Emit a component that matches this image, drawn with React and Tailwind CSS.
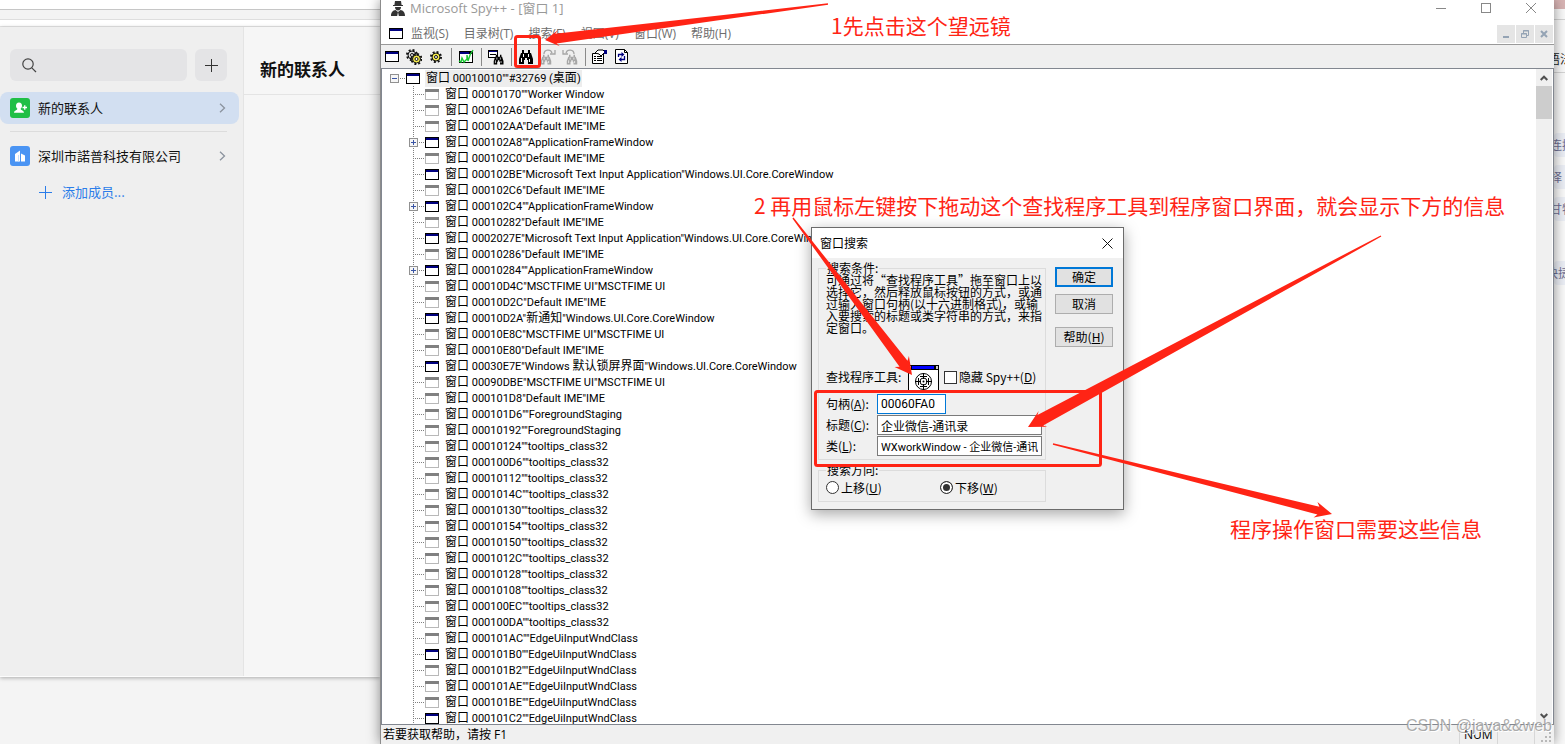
import React from "react";

const UI = "font-['Open_Sans','Noto_Sans_CJK_SC',sans-serif]";
const CJK = "font-['Noto_Sans_CJK_SC',sans-serif]";
const SANS = "font-['Roboto','Noto_Sans_CJK_SC',sans-serif]";

const IME = '"Default IME"IME';
const MSCTF = '"MSCTFIME UI"MSCTFIME UI';
const FRAME = '""ApplicationFrameWindow';
const TEXTIN = '"Microsoft Text Input Application"Windows.UI.Core.CoreWindow';
const TIP = '""tooltips_class32';
const EDGE = '""EdgeUiInputWndClass';
const STAGING = '""ForegroundStaging';

const nodes = [
  ["00010170", '""Worker Window', false, false],
  ["000102A6", IME, false, false],
  ["000102AA", IME, false, false],
  ["000102A8", FRAME, true, true],
  ["000102C0", IME, false, false],
  ["000102BE", TEXTIN, true, false],
  ["000102C6", IME, false, false],
  ["000102C4", FRAME, true, true],
  ["00010282", IME, false, false],
  ["0002027E", TEXTIN, true, false],
  ["00010286", IME, false, false],
  ["00010284", FRAME, true, true],
  ["00010D4C", MSCTF, false, false],
  ["00010D2C", IME, false, false],
  ["00010D2A", '"新通知"Windows.UI.Core.CoreWindow', true, false],
  ["00010E8C", MSCTF, false, false],
  ["00010E80", IME, false, false],
  ["00030E7E", '"Windows 默认锁屏界面"Windows.UI.Core.CoreWindow', true, false],
  ["00090DBE", MSCTF, false, false],
  ["000101D8", IME, false, false],
  ["000101D6", STAGING, false, false],
  ["00010192", STAGING, false, false],
  ["00010124", TIP, false, false],
  ["000100D6", TIP, false, false],
  ["00010112", TIP, false, false],
  ["0001014C", TIP, false, false],
  ["00010130", TIP, false, false],
  ["00010154", TIP, false, false],
  ["00010150", TIP, false, false],
  ["0001012C", TIP, false, false],
  ["00010128", TIP, false, false],
  ["00010108", TIP, false, false],
  ["000100EC", TIP, false, false],
  ["000100DA", TIP, false, false],
  ["000101AC", EDGE, false, false],
  ["000101B0", EDGE, true, false],
  ["000101B2", EDGE, false, false],
  ["000101AE", EDGE, false, false],
  ["000101BE", EDGE, false, false],
  ["000101C2", EDGE, true, false],
];

function WindowIcon({ active = true }) {
  return (
    <svg width="14" height="11" viewBox="0 0 14 11" className="shrink-0" shapeRendering="crispEdges">
      <rect width="14" height="11" fill={active ? "#000" : "#b8b8b8"} />
      <rect x="1" y="3" width="12" height="7" fill="#fff" />
      <rect x={active ? 1 : 0} y={active ? 1 : 0} width={active ? 12 : 14} height={active ? 2 : 3} fill={active ? "#000080" : "#808080"} />
    </svg>
  );
}

function Connector({ expandable }) {
  return (
    <svg width="16" height="16" viewBox="0 0 16 16" className="shrink-0" shapeRendering="crispEdges">
      <path d="M4.500 0V16M4 8.500H16" stroke="#808080" strokeDasharray="1 1" />
      {expandable && (
        <>
          <rect x="0.500" y="4.500" width="8" height="8" fill="#f6f6f6" stroke="#919191" />
          <path d="M2 8.500H7M4.500 6V11" stroke="#3a55a5" />
        </>
      )}
    </svg>
  );
}

function Binoculars({ color = "#000" }) {
  return (
    <g fill={color}>
      <path d="M4 1h2v3h4V1h2v3h1l1 3 1 3v5h-5v-4H9V9H7v2H6v4H1v-5l1-3 1-3h1z" />
      <path d="M3.500 9v4M5.500 5v3M10.500 5v3M11.500 10v3" stroke="#fff" fill="none" />
    </g>
  );
}

function Gear({ x, y, fill = "#f4ea4c" }) {
  return (
    <g transform={`translate(${x} ${y})`}>
      <circle r="5" fill="none" stroke="#111" strokeWidth="2" strokeDasharray="1.960 1.960" />
      <circle r="4" fill={fill} stroke="#111" strokeWidth="1" />
      <circle r="1.500" fill="#fff" stroke="#111" />
    </g>
  );
}

const tools = [
  ["窗口", <g key="a"><rect x="1" y="2" width="14" height="11" /><rect x="2" y="5" width="12" height="7" fill="#fff" /><rect x="2" y="3" width="12" height="2" fill="#000080" /></g>],
  ["进程", <g key="b"><Gear x={6} y={6} fill="#ddd" /><Gear x={10.5} y={10} /></g>],
  ["线程", <Gear key="c" x={8} y={8} />],
  null,
  ["记录消息", <g key="d"><rect x="1" y="2" width="14" height="12" /><rect x="2" y="5" width="12" height="8" fill="#fff" /><rect x="2" y="3" width="9" height="2" fill="#000080" /><path d="M1 12l2 1 1-4 2 4 3-3V6l1 6 2-6 3-5" fill="none" stroke="#18c832" strokeWidth="1.4" /></g>],
  null,
  ["查找窗口", <g key="e"><rect x="0" y="1" width="10" height="8" /><rect x="1" y="3" width="8" height="5" fill="#fff" /><path d="M2 5.500h6" stroke="#000" /><rect x="1" y="2" width="8" height="1" fill="#000080" /><g transform="translate(5 5) scale(.7 .7)"><Binoculars /></g></g>],
  null,
  ["查找", <Binoculars key="f" />],
  ["查找下一个", <g key="g"><g transform="translate(0 5) scale(.75 .7)"><Binoculars color="#a6a6a6" /></g><path d="M4 5c0-5 7-5 8-1M15 1v4h-5" fill="none" stroke="#a6a6a6" strokeWidth="1.3" /></g>],
  ["查找上一个", <g key="h"><g transform="translate(4 5) scale(.75 .7)"><Binoculars color="#a6a6a6" /></g><path d="M12 5c0-5-7-5-8-1M1 1v4h5" fill="none" stroke="#a6a6a6" strokeWidth="1.3" /></g>],
  null,
  ["属性", <g key="i"><path d="M.5 4.500h11v10h-11z" fill="#fff" stroke="#000" /><path d="M2 7.500h2M5 7.500h5M2 9.500h2M5 9.500h5M2 11.500h2M5 11.500h5" stroke="#000" /><path d="M3 4l3-3h5l2 2-4 4-2-2z" fill="#fff" stroke="#000" /><path d="M12 1h3v4h-3z" fill="#000080" /></g>],
  ["刷新", <g key="j"><path d="M1.500 .5h9l3 3v11h-12z" fill="#fff" stroke="#000" /><path d="M10.500 .5v3h3" fill="none" stroke="#000" /><path d="M4.500 8V5.500H8M10.500 7v3.500H7" fill="none" stroke="#000080" strokeWidth="1.300" /><path d="M7.500 3l3 2.500-3 2.500zM7.500 8v5l-3-2.500z" fill="#000080" /></g>],
];

function Chevron() {
  return (
    <svg width="7" height="10" viewBox="0 0 7 10" fill="none" stroke="#8b939e" strokeWidth="1.300">
      <path d="M1 .8L5.500 5 1 9.200" />
    </svg>
  );
}

function Contacts() {
  return (
    <div className="relative flex w-[380px] shrink-0 flex-col bg-[#f4f4f4]">
      <div className="h-[10px] border-b border-[#c6c6c6] bg-white" />
      <div className="h-[10px] border-b border-[#dedede] bg-[#f3f3f3]" />
      <div className="h-[7px] border-b border-[#e6e6e6] bg-white" />
      <main className="flex h-[650px] border-b border-[#fcfcfc] shadow-[0_1px_4px_rgba(0,0,0,0.3)]">
        <aside className="w-[244px] shrink-0 border-r border-[#e4e4e4] bg-[#efefef] pt-[22px]">
          <div className="flex gap-2 pl-[10px]">
            <label className="flex h-8 w-[177px] items-center rounded-md bg-[#e4e4e6] pl-3">
              <svg width="15" height="15" viewBox="0 0 15 15" fill="none" stroke="#444" strokeWidth="1.200">
                <circle cx="6" cy="6" r="5.200" />
                <path d="M9.800 9.800l4.200 4.200" />
              </svg>
              <input aria-label="搜索" className="w-32 bg-transparent outline-none" />
            </label>
            <button aria-label="添加" className="flex size-8 items-center justify-center rounded-md bg-[#e4e4e6]">
              <svg width="13" height="13" viewBox="0 0 13 13" stroke="#333" shapeRendering="crispEdges">
                <path d="M0 6.500h13M6.500 0v13" />
              </svg>
            </button>
          </div>
          <nav className={`mt-[11px] flex flex-col text-[13px] text-[#111] ${CJK}`}>
            <a href="#contacts" className="mr-1 flex h-8 items-center rounded-lg bg-[#d2dff1] pr-[13px] pl-[10px]">
              <svg width="20" height="20" viewBox="0 0 20 20">
                <rect width="20" height="20" rx="3" fill="#20bf46" />
                <path d="M9 4.500c2 0 3 1.400 3 3.200 0 1.300-.6 2.200-1.400 3 0 1.500 3.400 1.600 3.400 4H4c0-2.400 3.400-2.500 3.400-4C6.600 9.900 6 9 6 7.700c0-1.800 1-3.200 3-3.200z" fill="#fff" />
                <path d="M12.500 9.500h4.500M14.750 7.200v4.600" stroke="#fff" strokeWidth="1.300" />
              </svg>
              <span className="ml-2 flex-1">新的联系人</span>
              <Chevron />
            </a>
            <hr className="mt-[7px] mr-4 ml-[10px] border-[#dcdcdc]" />
            <a href="#company" className="mt-2 mr-1 flex h-8 items-center pr-[13px] pl-[10px]">
              <svg width="20" height="20" viewBox="0 0 20 20">
                <rect width="20" height="20" rx="3" fill="#4a94f3" />
                <path d="M5 15.500V8l5-3.500v11zM11 7.500l4 2v6h-4z" fill="#fff" />
                <path d="M8.500 9v6.500" stroke="#c9dffb" />
              </svg>
              <span className="ml-2 flex-1">深圳市諾普科技有限公司</span>
              <Chevron />
            </a>
            <a href="#add" className="mt-1 flex h-8 items-center gap-[10px] pl-[39px] text-[#2b7de9]">
              <svg width="13" height="13" viewBox="0 0 13 13" stroke="#2b7de9" shapeRendering="crispEdges">
                <path d="M0 6.500h13M6.500 0v13" />
              </svg>
              <span>添加成员...</span>
            </a>
          </nav>
        </aside>
        <section className="min-w-0 flex-1 bg-[#f6f6f6]">
          <header className="flex h-[68px] items-center border-b border-[#e4e4e4] pt-4 pl-4">
            <h1 className={`text-[17px] font-bold text-[#111] ${CJK}`}>新的联系人</h1>
          </header>
        </section>
      </main>
    </div>
  );
}

function TitleBar() {
  return (
    <header className="flex h-4 items-center bg-white pl-[10px]">
      <svg width="14" height="15" viewBox="0 0 14 15" fill="#333">
        <path d="M4 0h6l.6 4H12v1H2V4h1.400zM4 6h6c0 2-1.200 3.500-3 3.500S4 8 4 6zM0 15c0-4 2-5.500 4.500-6L7 11l2.500-2c2.500.5 4.500 2 4.500 6z" />
        <path d="M7 11l-1 4h2z" fill="#ddd" />
      </svg>
      <span className={`ml-[5px] flex-1 text-[13px] leading-4 whitespace-nowrap text-[#999] ${UI}`}>Microsoft Spy++ - [窗口 1]</span>
      <div className="flex h-4 items-center gap-[35px] pr-[18px]">
        <button aria-label="最小化"><svg width="10" height="10" viewBox="0 0 10 10" stroke="#888" shapeRendering="crispEdges"><path d="M0 5.500h10" /></svg></button>
        <button aria-label="最大化"><svg width="10" height="10" viewBox="0 0 10 10" fill="none" stroke="#888" shapeRendering="crispEdges"><path d="M.5.5h9v9h-9z" /></svg></button>
        <button aria-label="关闭"><svg width="10" height="10" viewBox="0 0 10 10" stroke="#888"><path d="M0 0l10 10M10 0L0 10" /></svg></button>
      </div>
    </header>
  );
}

function MenuBar() {
  const child = "flex size-[18px] items-center justify-center bg-[#e5e5e5]";
  return (
    <nav className="flex h-[29px] items-center border-b border-[#999] bg-white pt-[7px] pl-2">
      <WindowIcon />
      <div className={`ml-2 flex flex-1 gap-[15px] text-[12px] whitespace-nowrap text-[#6d6d6d] ${UI}`}>
        {["监视(S)", "目录树(T)", "搜索(F)", "视图(V)", "窗口(W)", "帮助(H)"].map((m) => (
          <button key={m}>{m}</button>
        ))}
      </div>
      <div className="flex gap-px pr-px">
        <button aria-label="最小化子窗口" className={child}>
          <svg width="10" height="10" viewBox="0 0 10 10" stroke="#94a3b4" strokeWidth="2"><path d="M2 8h6" /></svg>
        </button>
        <button aria-label="还原子窗口" className={child}>
          <svg width="10" height="10" viewBox="0 0 10 10" fill="none" stroke="#94a3b4"><path d="M1.500 4.500h5v4h-5zM1 5h6M3.500 4V1.500h5v5H7M3 2h6" /></svg>
        </button>
        <button aria-label="关闭子窗口" className={child}>
          <svg width="10" height="10" viewBox="0 0 10 10" stroke="#94a3b4" strokeWidth="2"><path d="M2 2l6 6M8 2L2 8" /></svg>
        </button>
      </div>
    </nav>
  );
}

function ToolBar() {
  return (
    <div className="flex h-[23px] shrink-0 items-center bg-[#efefef]">
      {tools.map((t, i) =>
        t ? (
          <button key={t[0]} aria-label={t[0]} className="flex w-[22px] justify-center">
            <svg width="16" height="16" viewBox="0 0 16 16">{t[1]}</svg>
          </button>
        ) : (
          <span key={i} className="flex w-2 justify-center"><i className="h-[18px] w-px bg-[#8a8a8a]" /></span>
        )
      )}
    </div>
  );
}

function NodeLabel({ code, text }) {
  const parts = `窗口 ${code}${text}`.split(/([\u4e00-\u9fff]+)/);
  return (
    <span className="whitespace-pre text-black">
      {parts.map((p, i) => (i % 2 ? <span key={i} className="text-[12px]">{p}</span> : p))}
    </span>
  );
}

function Tree() {
  return (
    <div className="flex min-h-0 flex-1 border border-[#828790] bg-white">
      <ul className={`min-w-0 flex-1 overflow-hidden pt-px text-[11px] leading-4 ${SANS}`}>
        <li className="flex h-4 items-center pl-2">
          <svg width="16" height="16" viewBox="0 0 16 16" shapeRendering="crispEdges">
            <rect x=".5" y="4.500" width="8" height="8" fill="#f6f6f6" stroke="#919191" />
            <path d="M2 8.500H7" stroke="#3a55a5" />
            <path d="M10 8.500H16" stroke="#808080" strokeDasharray="1 1" />
          </svg>
          <WindowIcon />
          <span className="ml-[5px] bg-[#ededed] px-px">
            <NodeLabel code="00010010" text={'""#32769 (桌面)'} />
          </span>
        </li>
        {nodes.map(([code, text, active, plus]) => (
          <li key={code} className="flex h-4 items-center pl-[27px]">
            <Connector expandable={plus} />
            <span className="mr-[6px]"><WindowIcon active={active} /></span>
            <NodeLabel code={code} text={text} />
          </li>
        ))}
      </ul>
      <div className="mr-px flex w-4 flex-col items-center bg-[#f0f0f0]">
        <button aria-label="向上滚动" className="flex h-[17px] items-center">
          <svg width="8" height="6" viewBox="0 0 8 6" fill="none" stroke="#505050" strokeWidth="2"><path d="M.7 5L4 1.700 7.300 5" /></svg>
        </button>
        <div className="h-[33px] w-full bg-[#cdcdcd]" />
        <button aria-label="向下滚动" className="mt-auto flex h-[17px] items-center">
          <svg width="8" height="6" viewBox="0 0 8 6" fill="none" stroke="#505050" strokeWidth="2"><path d="M.7 1L4 4.300 7.300 1" /></svg>
        </button>
      </div>
    </div>
  );
}

function StatusBar() {
  return (
    <footer className={`flex h-[19px] shrink-0 items-center bg-[#f0f0f0] pl-[2px] text-[12px] leading-4 text-black ${UI}`}>
      <span className="flex-1">若要获取帮助，请按 F1</span>
      <span className="flex h-full w-[39px] items-center border-x border-[#d7d7d7] pl-1">NUM</span>
      <span className="h-full w-[37px] border-r border-[#d7d7d7]" />
      <svg width="19" height="19" viewBox="0 0 19 19" fill="#b8b8b8">
        <path d="M14 7h2v2h-2zM10 11h2v2h-2zM14 11h2v2h-2zM6 15h2v2H6zM10 15h2v2h-2zM14 15h2v2h-2z" />
      </svg>
    </footer>
  );
}

function Key({ children, tail = "" }) {
  return <>(<u>{children}</u>){tail}</>;
}

function SearchDialog() {
  const field = `h-5 border bg-white px-[3px] text-black outline-none ${SANS}`;
  const button = "flex h-5 w-[58px] items-center justify-center border bg-[#e1e1e1]";
  return (
    <div role="dialog" aria-label="窗口搜索" className="absolute top-[227px] left-[811px] w-[313px] border border-[#6b6b6b] bg-[#f0f0f0] shadow-[0_4px_14px_rgba(0,0,0,0.35)]">
      <header className={`flex h-[30px] items-center bg-white pr-[10px] pl-2 text-[12px] ${CJK}`}>
        <span className="flex-1">窗口搜索</span>
        <button aria-label="关闭对话框">
          <svg width="11" height="11" viewBox="0 0 11 11" stroke="#111"><path d="M.5.5l10 10M10.500.5l-10 10" /></svg>
        </button>
      </header>
      <form className={`flex justify-between pr-[10px] pb-[7px] pl-[6px] text-[12px] leading-3 text-black ${CJK}`}>
        <div className="w-[228px]">
          <fieldset className="mt-1 h-[198px] border border-[#dcdcdc] pl-[7px]">
            <legend className="px-px">搜索条件:</legend>
            <p className="h-[90px] whitespace-nowrap">
              可通过将“查找程序工具”拖至窗口上以<br />
              选择它，然后释放鼠标按钮的方式，或通<br />
              过输入窗口句柄(以十六进制格式)，或输<br />
              入要搜索的标题或类字符串的方式，来指<br />
              定窗口。
            </p>
            <div className="flex h-[26px] items-end whitespace-nowrap">
              <span className="w-[82px] self-center">查找程序工具:</span>
              <svg width="31" height="25" viewBox="0 0 31 25" className="shrink-0">
                <path d="M.5 26V.5h30V26" fill="#fff" stroke="#000" />
                <rect width="31" height="5" />
                <rect x="4" y="1" width="22" height="3" fill="#00f" />
                <path d="M1 1h2v3H1zM28 1h2v3h-2z" fill="#ccc" />
                <g fill="none" stroke="#000">
                  <circle cx="15.500" cy="16.500" r="8" />
                  <circle cx="15.500" cy="16.500" r="3.500" />
                  <path d="M15.500 8v6M15.500 19v6M7 16.500h6M18 16.500h6M12 11.500h7M12 21.500h7M10.500 13v7M20.500 13v7" />
                </g>
                <circle cx="15.500" cy="16.500" r="1" />
              </svg>
              <label className="ml-[5px] flex items-center gap-[2px] self-center">
                <input type="checkbox" className="size-[13px] appearance-none border border-[#333] bg-white" />
                <span>隐藏 Spy++(<u>D</u>)</span>
              </label>
            </div>
            <div className="mt-1 grid grid-cols-[51px_165px] items-center gap-y-px">
              <label htmlFor="handle">句柄<Key tail=":">A</Key></label>
              <input id="handle" defaultValue="00060FA0" className={`${field} w-[69px] border-[#0078d7] text-[12px]`} />
              <label htmlFor="caption">标题<Key tail=":">C</Key></label>
              <input id="caption" defaultValue="企业微信-通讯录" className={`${field} border-[#7a7a7a] text-[12px]`} />
              <label htmlFor="class">类<Key tail=":">L</Key></label>
              <input id="class" defaultValue="WXworkWindow - 企业微信-通讯录" className={`${field} border-[#7a7a7a] text-[11px]`} />
            </div>
          </fieldset>
          <fieldset className="mt-1 h-[38px] border border-[#dcdcdc] pl-[7px]">
            <legend className="px-px">搜索方向:</legend>
            <div className="mt-[5px] flex">
              <label className="flex w-[114px] items-center gap-[2px]">
                <input type="radio" name="direction" className="size-[13px] appearance-none rounded-full border border-[#333] bg-white" />
                <span>上移<Key>U</Key></span>
              </label>
              <label className="flex items-center gap-[2px]">
                <input type="radio" name="direction" defaultChecked className="size-[13px] appearance-none rounded-full border border-[#333] bg-[#333] shadow-[inset_0_0_0_2px_#fff]" />
                <span>下移<Key>W</Key></span>
              </label>
            </div>
          </fieldset>
        </div>
        <div className="mt-[9px] flex flex-col">
          <button type="button" className={`${button} border-[#0078d7] ring-1 ring-[#0078d7] ring-inset`}>确定</button>
          <button type="button" className={`${button} mt-[7px] border-[#adadad]`}>取消</button>
          <button type="button" className={`${button} mt-[13px] border-[#adadad]`}>帮助<Key>H</Key></button>
        </div>
      </form>
    </div>
  );
}

// A wedge that widens from its tail toward an arrow head.
function arrowPoints(x1, y1, x2, y2, head, half, shaft) {
  const len = Math.hypot(x2 - x1, y2 - y1);
  const ux = (x2 - x1) / len;
  const uy = (y2 - y1) / len;
  const at = (back, side) => `${x2 - ux * back - uy * side},${y2 - uy * back + ux * side}`;
  return [at(len, 0.7), at(head - 3, shaft), at(head, half), at(0, 0), at(head, -half), at(head - 3, -shaft), at(len, -0.7)].join(" ");
}

function Annotations() {
  const note = `pointer-events-none absolute text-[21px] leading-7 whitespace-nowrap text-[#ff2415] ${CJK}`;
  return (
    <>
      <svg width="1565" height="744" viewBox="0 0 1565 744" className="pointer-events-none absolute top-0 left-0" fill="#ff2415">
        <polygon points={arrowPoints(828, 4, 545, 40, 14, 8, 5)} />
        <polygon points={arrowPoints(793, 218, 912, 375, 17, 9, 5)} />
        <polygon points={arrowPoints(1381, 236, 1028, 427, 17, 9, 6)} />
        <polygon points={arrowPoints(1053, 444, 1332, 514, 17, 8, 4)} />
        <rect x="515.500" y="36.500" width="24" height="30" rx="2" fill="none" stroke="#ff2415" strokeWidth="3" />
        <rect x="815.500" y="391.500" width="285" height="74" rx="2" fill="none" stroke="#ff2415" strokeWidth="3" />
      </svg>
      <p className={`${note} top-[11px] left-[831px]`}>1先点击这个望远镜</p>
      <p className={`${note} top-[191px] left-[754px]`}>2 再用鼠标左键按下拖动这个查找程序工具到程序窗口界面，就会显示下方的信息</p>
      <p className={`${note} top-[514px] left-[1230px]`}>程序操作窗口需要这些信息</p>
      <p className="pointer-events-none absolute right-[13px] bottom-[8px] font-['Liberation_Sans',sans-serif] text-[16px] leading-5 text-[#969696]/80 [text-shadow:1px_1px_0_#fff]">CSDN @java&amp;&amp;web</p>
    </>
  );
}

function Behind() {
  const chip = "flex h-6 items-center rounded-l bg-[#eceff6] whitespace-nowrap";
  return (
    <aside className={`w-[11px] shrink-0 overflow-hidden bg-[#fafafa] text-[12px] text-[#6f7094] ${CJK}`}>
      <div className="h-[9px] bg-[#d8b4b4]" />
      <div className="h-[11px] border-b border-[#d5d5d5]" />
      <div className="flex h-[53px] items-end border-b border-[#d5d5d5] pb-1 whitespace-nowrap text-[#222]"><span className="-ml-[6px]">语法</span></div>
      <div className="mt-[60px] flex flex-col gap-2">
        <div className={chip}><span className="-ml-1">连接</span></div>
        <div className={chip}><span className="-ml-1">择</span></div>
        <div className={chip}><span className="-ml-1">甘特</span></div>
        <div className={`${chip} mt-8`}><span className="-ml-2">快捷</span></div>
      </div>
    </aside>
  );
}

export default function App() {
  return (
    <div className="relative flex h-screen w-full overflow-hidden bg-[#f4f4f4]">
      <Contacts />
      <div className="relative z-10 flex min-w-0 flex-1 flex-col border-l border-[#8c8c8c] bg-white shadow-[0_0_12px_rgba(0,0,0,0.45)]">
        <TitleBar />
        <MenuBar />
        <ToolBar />
        <Tree />
        <StatusBar />
      </div>
      <Behind />
      <div className="absolute inset-0 z-20">
        <SearchDialog />
        <Annotations />
      </div>
    </div>
  );
}
